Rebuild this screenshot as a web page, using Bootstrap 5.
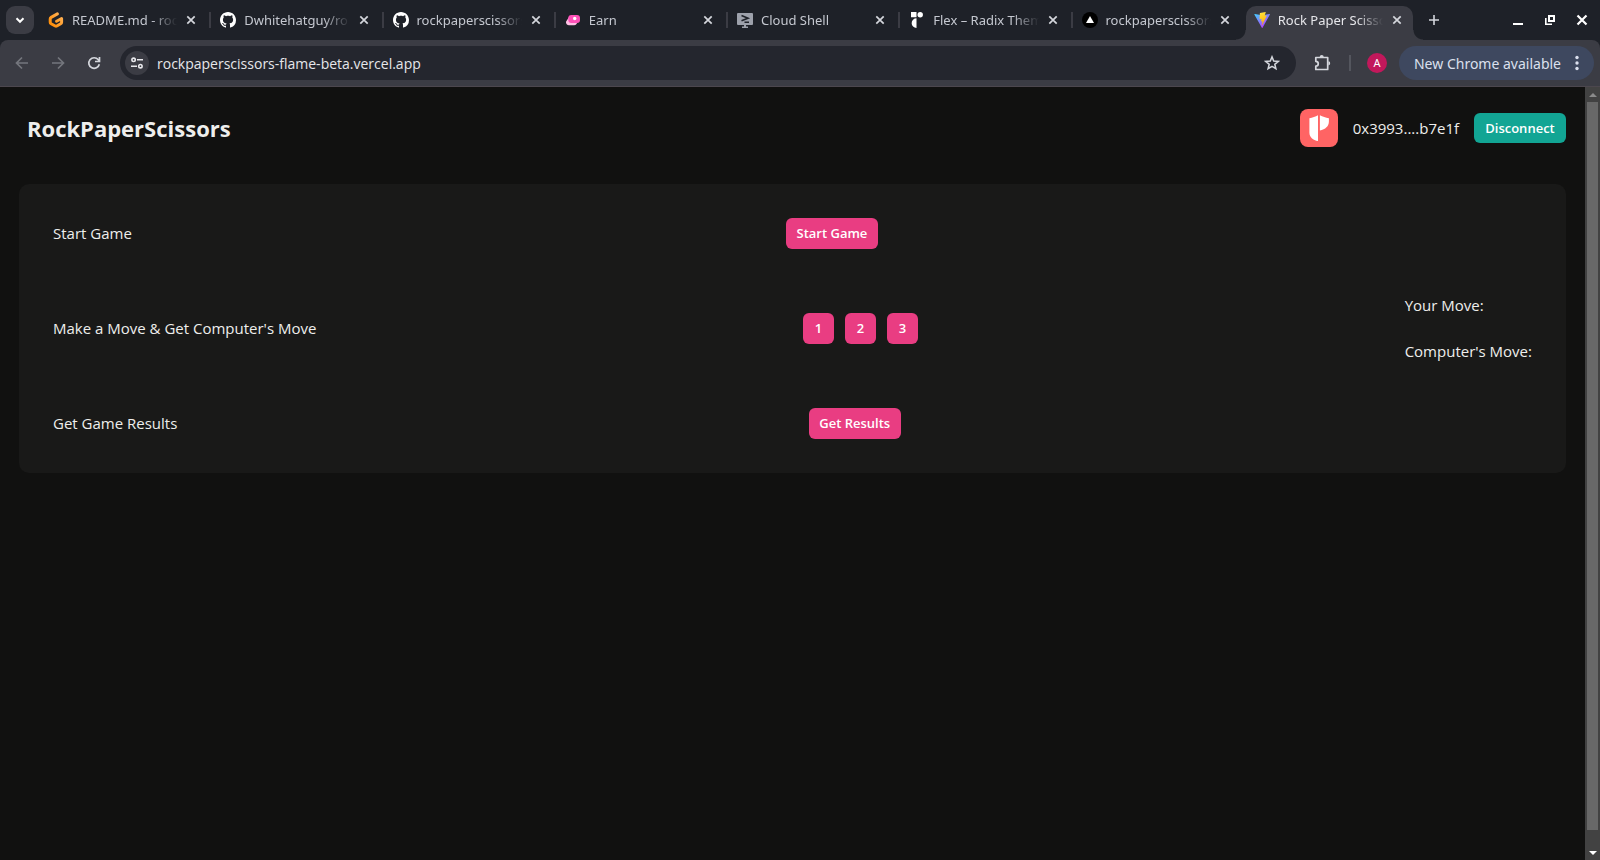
<!DOCTYPE html>
<html lang="en" data-bs-theme="dark">
<head>
<meta charset="utf-8">
<meta name="viewport" content="width=device-width, initial-scale=1">
<title>Rock Paper Scissors</title>
<link href="https://cdn.jsdelivr.net/npm/bootstrap@5.3.0/dist/css/bootstrap.min.css" rel="stylesheet">
<style>
  :root {
    --strip: #1e2128; --bar: #3b3c44; --field: #24262e; --page: #111110;
    --panel: #191918; --ink: #eeeeec; --pink: #e93d82; --teal: #12a594;
  }
  body { font-family: "Open Sans", "Noto Sans", sans-serif; font-size: 15px; line-height: 25px; color: var(--ink); background: var(--page); }
  header { font-family: "Noto Sans", "Open Sans", sans-serif; }
  svg { display: block; flex: none; }
  .plain-btn { border: 0; padding: 0; background: none; color: #d4d6dc; display: flex; align-items: center; justify-content: center; flex: none; }

  /* tab strip */
  .tab-strip { background: var(--strip); height: 40px; }
  .tab-search { width: 28px; height: 28px; border-radius: 9px; background: var(--bar); color: #fff; margin: 6px 5px 6px 6px; }
  .tab-item { flex: 1 1 0; min-width: 0; height: 40px; padding: 0 12px 0 9px; position: relative; }
  .tab-item::after { content: ""; position: absolute; right: 0; top: 12px; width: 2px; height: 16px; background: #3b3c44; }
  .tab-item.before-current::after { display: none; }
  .tab-link { color: #c5c8d0; font-size: 13px; line-height: 40px; text-decoration: none; white-space: nowrap; overflow: hidden; flex: 1; min-width: 0; margin: 0 6px 0 8px;
    -webkit-mask-image: linear-gradient(90deg, #000 calc(100% - 26px), transparent); mask-image: linear-gradient(90deg, #000 calc(100% - 26px), transparent); }
  .tab-close { width: 16px; height: 16px; }
  .tab-item.current { height: 34px; margin: 6px 5px 0 1px; padding: 0 8px; background: var(--bar); border-radius: 10px 10px 0 0; }
  .tab-item.current .tab-link { color: #e6e6ea; line-height: 28px; }
  .tab-item.current::before, .tab-item.current::after { content: ""; position: absolute; display: block; top: auto; bottom: 0; width: 10px; height: 10px; }
  .tab-item.current::before { left: -10px; right: auto; background: radial-gradient(circle at 0 0, transparent 9px, var(--bar) 10px); }
  .tab-item.current::after { right: -10px; background: radial-gradient(circle at 100% 0, transparent 9px, var(--bar) 10px); }
  .current-inner { height: 28px; }
  .window-tools { gap: 16px; padding: 0 10px 0 68px; }
  .window-tools .plain-btn { width: 16px; height: 16px; color: #fff; }

  /* toolbar */
  .tool-bar-wrap { background: var(--strip); }
  .tool-bar { background: var(--bar); height: 47px; border-radius: 8px 8px 0 0; border-bottom: 1px solid #4c474e; padding: 6px 6px 6px 14px; }
  .nav-tools { gap: 20px; margin-right: 18px; }
  .nav-tools .plain-btn { width: 16px; height: 16px; }
  .nav-tools .plain-btn:disabled { color: #74767d; }
  .url-field { background: var(--field); height: 34px; border-radius: 17px; padding: 0 16px 0 5px; }
  .site-info { width: 24px; height: 24px; border-radius: 50%; background: var(--bar); color: #e8e8ec; }
  .url-input { border: 0; outline: 0; background: transparent; color: #e6e6ea; font-family: "Open Sans", "Noto Sans", sans-serif; font-size: 14px; padding: 0; margin-left: 8px; }
  .tool-split { width: 2px; height: 16px; background: #54565e; margin: 0 16px 0 17px; }
  .avatar-dot { width: 20px; height: 20px; border-radius: 50%; background: #c2185b; color: #fff; font-size: 11px; line-height: 20px; margin-right: 12px; }
  .update-pill { height: 34px; border-radius: 17px; background: #3e485f; color: #dbe0ee; font-size: 14px; padding: 0 15px; gap: 14px; }

  /* page */
  .game-page { padding: 22px 19px 0; min-width: 0; }
  .game-head { padding-left: 8px; margin-bottom: 37px; height: 38px; }
  .game-title { font-size: 22px; line-height: 38px; font-weight: 700; margin: 0; color: var(--ink); }
  .wallet { gap: 15px; }
  .btn-game { --bs-btn-color: #fff; --bs-btn-hover-color: #fff; --bs-btn-bg: var(--pink); --bs-btn-hover-bg: #df3478;
    border: 0; border-radius: 6px; padding: 0 11px; height: 31px; min-width: 31px; font-size: 13px; line-height: 31px; font-weight: 600; }
  .btn-wallet { --bs-btn-bg: var(--teal); --bs-btn-hover-bg: #0d9b8a; height: 30px; line-height: 30px; width: 92px; padding: 0; }
  .btn-wide { width: 92px; padding: 0; }
  .game-panel { background: var(--panel); border: 0; border-radius: 10px; padding: 34px; gap: 44px; }
  .move-buttons { gap: 11px; }
  .move-list { gap: 21px; }

  /* scrollbar */
  .scroll-rail { width: 15px; background: #424242; flex: none; color: #8b8b8b; }
  .scroll-cap { height: 15px; }
  .scroll-thumb { width: 11px; background: #686868; margin-bottom: 15px; }
</style>
</head>
<body>
<svg class="d-none" aria-hidden="true">
  <symbol id="i-close" viewBox="0 0 16 16"><path d="M4.300 4.300l7.400 7.400M11.700 4.300l-7.400 7.400" stroke="currentColor" stroke-width="1.700"/></symbol>
  <symbol id="i-github" viewBox="0 0 16 16"><path fill="#fff" d="M8 0C3.58 0 0 3.58 0 8c0 3.54 2.29 6.53 5.47 7.59.4.07.55-.17.55-.38 0-.19-.01-.82-.01-1.49-2.01.37-2.53-.49-2.69-.94-.09-.23-.48-.94-.82-1.13-.28-.15-.68-.52-.01-.53.63-.01 1.08.58 1.23.82.72 1.21 1.87.87 2.33.66.07-.52.28-.87.51-1.07-1.78-.2-3.64-.89-3.64-3.95 0-.87.31-1.59.82-2.15-.08-.2-.36-1.02.08-2.12 0 0 .67-.21 2.2.82.64-.18 1.32-.27 2-.27s1.36.09 2 .27c1.53-1.04 2.2-.82 2.2-.82.44 1.1.16 1.92.08 2.12.51.56.82 1.27.82 2.15 0 3.07-1.87 3.75-3.65 3.95.29.25.54.73.54 1.48 0 1.07-.01 1.93-.01 2.2 0 .21.15.46.55.38A8.01 8.01 0 0 0 16 8c0-4.42-3.58-8-8-8z"/></symbol>
</svg>

<div class="d-flex flex-column vh-100 overflow-hidden">
  <header>
    <nav class="tab-strip d-flex align-items-center" aria-label="Tabs">
      <button class="plain-btn tab-search" aria-label="Search tabs"><svg width="12" height="12" viewBox="0 0 12 12"><path d="M2.500 4.300L6 7.800l3.500-3.500" fill="none" stroke="currentColor" stroke-width="2"/></svg></button>

      <div class="tab-item d-flex align-items-center">
        <svg width="16" height="16" viewBox="0 0 16 16"><defs><linearGradient id="gp" x1="1" y1="0" x2="0" y2="1"><stop offset="0" stop-color="#ffb45b"/><stop offset="1" stop-color="#ff8a00"/></linearGradient></defs><path d="M9.400 1.900L3.100 5.400Q2.200 5.900 2.200 6.900V10.200Q2.200 11.200 3.100 11.700L7.200 14Q8 14.400 8.800 14L12.700 11.700Q13.600 11.200 13.600 10.200V6.500L8.600 9.200" fill="none" stroke="url(#gp)" stroke-width="3" stroke-linecap="round" stroke-linejoin="round"/></svg>
        <a class="tab-link" href="#">README.md - roc</a>
        <button class="plain-btn tab-close" aria-label="Close tab"><svg width="16" height="16"><use href="#i-close"/></svg></button>
      </div>
      <div class="tab-item d-flex align-items-center">
        <svg width="16" height="16"><use href="#i-github"/></svg>
        <a class="tab-link" href="#">Dwhitehatguy/ro</a>
        <button class="plain-btn tab-close" aria-label="Close tab"><svg width="16" height="16"><use href="#i-close"/></svg></button>
      </div>
      <div class="tab-item d-flex align-items-center">
        <svg width="16" height="16"><use href="#i-github"/></svg>
        <a class="tab-link" href="#">rockpaperscissors</a>
        <button class="plain-btn tab-close" aria-label="Close tab"><svg width="16" height="16"><use href="#i-close"/></svg></button>
      </div>
      <div class="tab-item d-flex align-items-center">
        <svg width="16" height="16" viewBox="0 0 16 16"><path d="M4 5h7a3 3 0 0 1 2 4.500l-1.500 2.500a3 3 0 0 1-2.500 1.300H4a3 3 0 0 1-3-3.500z" fill="#ffc1e5"/><rect x="3.300" y="3" width="11.700" height="8" rx="3" fill="#ff50b8"/><circle cx="9.700" cy="6.500" r="1.700" fill="#fff"/></svg>
        <a class="tab-link" href="#">Earn</a>
        <button class="plain-btn tab-close" aria-label="Close tab"><svg width="16" height="16"><use href="#i-close"/></svg></button>
      </div>
      <div class="tab-item d-flex align-items-center">
        <svg width="16" height="16" viewBox="0 0 16 16"><rect y="1" width="16" height="12" rx="1" fill="#9da1ab"/><path d="M7 13h2v1.500h2V16H5v-1.500h2z" fill="#9da1ab"/><path d="M4.500 3.500l6.500 2.700-6.500 2.500M7.500 10.200H12" fill="none" stroke="#1e2128" stroke-width="1.600"/></svg>
        <a class="tab-link" href="#">Cloud Shell</a>
        <button class="plain-btn tab-close" aria-label="Close tab"><svg width="16" height="16"><use href="#i-close"/></svg></button>
      </div>
      <div class="tab-item d-flex align-items-center">
        <svg width="16" height="16" viewBox="0 0 16 16"><path d="M2 0h5.500v5.300H2zM7.500 6.300V16a4.850 4.850 0 0 1 0-9.700z" fill="#fff"/><circle cx="11.200" cy="2.700" r="2.700" fill="#fff"/></svg>
        <a class="tab-link" href="#">Flex – Radix Them</a>
        <button class="plain-btn tab-close" aria-label="Close tab"><svg width="16" height="16"><use href="#i-close"/></svg></button>
      </div>
      <div class="tab-item before-current d-flex align-items-center">
        <svg width="16" height="16" viewBox="0 0 16 16"><circle cx="8" cy="8" r="8"/><path d="M8 4l4 7H4z" fill="#fff"/></svg>
        <a class="tab-link" href="#">rockpaperscissors</a>
        <button class="plain-btn tab-close" aria-label="Close tab"><svg width="16" height="16"><use href="#i-close"/></svg></button>
      </div>
      <div class="tab-item current">
        <div class="current-inner d-flex align-items-center">
          <svg width="16" height="16" viewBox="0 0 32 32"><defs><linearGradient id="va" x1="0" y1="0" x2=".7" y2="1"><stop offset="0" stop-color="#41d1ff"/><stop offset="1" stop-color="#bd34fe"/></linearGradient><linearGradient id="vb" x1=".4" y1="0" x2=".6" y2="1"><stop offset="0" stop-color="#ffea83"/><stop offset=".1" stop-color="#ffdd35"/><stop offset="1" stop-color="#ffa800"/></linearGradient></defs><path d="M31.800 5.200L17.100 31.500c-.3.500-1.100.5-1.400 0L.7 5.200c-.3-.6.200-1.300.9-1.200l14.700 2.600L31 4c.7-.1 1.100.600.800 1.200z" fill="url(#va)"/><path d="M23 .1L12.100 2.200c-.2 0-.3.200-.3.400l-.7 11.300c0 .3.200.5.500.4l3-.7c.3-.1.500.2.500.5l-.9 4.400c-.1.300.2.600.5.500l1.900-.6c.3-.1.600.2.500.500l-1.400 6.900c-.1.400.5.700.7.300l9.200-18.500c.2-.3-.1-.6-.4-.500l-3.200.6c-.3.100-.600-.200-.500-.500l2.100-7.200c.100-.300-.200-.600-.600-.500z" fill="url(#vb)"/></svg>
          <a class="tab-link" href="#" aria-current="page">Rock Paper Scisso</a>
          <button class="plain-btn tab-close" aria-label="Close tab"><svg width="16" height="16"><use href="#i-close"/></svg></button>
        </div>
      </div>
      <button class="plain-btn ms-2" aria-label="New tab"><svg width="16" height="16" viewBox="0 0 16 16"><path d="M8 3v10M3 8h10" stroke="currentColor" stroke-width="1.600"/></svg></button>
      <div class="window-tools d-flex">
        <button class="plain-btn" aria-label="Minimize"><svg width="16" height="16" viewBox="0 0 16 16"><path d="M3 12h10" stroke="currentColor" stroke-width="2"/></svg></button>
        <button class="plain-btn" aria-label="Restore"><svg width="16" height="16" viewBox="0 0 16 16" fill="none" stroke="currentColor"><path d="M7 4h5v5H7z" stroke-width="2"/><path d="M3.800 6v6.200H10" stroke-width="1.600"/></svg></button>
        <button class="plain-btn" aria-label="Close window"><svg width="16" height="16" viewBox="0 0 16 16"><path d="M3.500 3.500l9 9M12.500 3.500l-9 9" stroke="currentColor" stroke-width="2.200"/></svg></button>
      </div>
    </nav>

    <div class="tool-bar-wrap">
      <div class="tool-bar d-flex align-items-center">
        <div class="nav-tools d-flex">
          <button class="plain-btn" aria-label="Back" disabled><svg width="16" height="16" viewBox="0 0 16 16" fill="none" stroke="currentColor" stroke-width="1.700"><path d="M14 8H3M8 2.500L2.500 8 8 13.500"/></svg></button>
          <button class="plain-btn" aria-label="Forward" disabled><svg width="16" height="16" viewBox="0 0 16 16" fill="none" stroke="currentColor" stroke-width="1.700"><path d="M2 8h11M8 2.500L13.500 8 8 13.500"/></svg></button>
          <button class="plain-btn" aria-label="Reload"><svg width="16" height="16" viewBox="0 0 16 16" fill="none" stroke="currentColor" stroke-width="1.700"><path d="M13.300 9.200A5.300 5.300 0 1 1 12.300 4.800L13.300 6M13.500 2v4.500H9"/></svg></button>
        </div>
        <div class="url-field d-flex align-items-center flex-fill">
          <button class="plain-btn site-info" aria-label="Site information"><svg width="14" height="14" viewBox="0 0 14 14" fill="none" stroke="currentColor" stroke-width="1.600"><circle cx="3.600" cy="3.800" r="1.700"/><path d="M7 3.800h6M1 10.200h6"/><circle cx="10.400" cy="10.200" r="1.700"/></svg></button>
          <input class="url-input flex-fill" type="text" aria-label="Address" value="rockpaperscissors-flame-beta.vercel.app">
          <button class="plain-btn" aria-label="Bookmark this tab"><svg width="16" height="16" viewBox="0 0 16 16" fill="none" stroke="currentColor" stroke-width="1.500"><path d="M8 1.900l1.700 4.200 4.600.3-3.500 2.900 1.100 4.400L8 11.300l-3.900 2.400 1.100-4.400-3.500-2.900 4.600-.3z"/></svg></button>
        </div>
        <button class="plain-btn ms-3" aria-label="Extensions"><svg width="20" height="20" viewBox="0 0 20 20"><path d="M4.300 4.500h11.400V16.500H3.800v-3.300a2.300 2.300 0 0 0 0-4.900V4.500z" fill="none" stroke="currentColor" stroke-width="1.700" stroke-linejoin="round"/><path d="M7.700 3.900a2 1.900 0 0 1 4 0zM16.400 8.200a1.800 2.100 0 0 1 0 4.200z" fill="currentColor"/></svg></button>
        <span class="tool-split"></span>
        <button class="plain-btn avatar-dot" aria-label="Profile A">A</button>
        <button class="plain-btn update-pill"><span>New Chrome available</span><svg width="4" height="16" viewBox="0 0 4 16" fill="currentColor"><circle cx="2" cy="2.500" r="1.700"/><circle cx="2" cy="8" r="1.700"/><circle cx="2" cy="13.500" r="1.700"/></svg></button>
      </div>
    </div>
  </header>

  <div class="d-flex flex-fill">
    <main class="game-page flex-fill">
      <div class="game-head d-flex justify-content-between align-items-center">
        <h1 class="game-title">RockPaperScissors</h1>
        <div class="wallet d-flex align-items-center">
          <svg width="38" height="38" viewBox="0 0 38 38"><rect width="38" height="38" rx="8" fill="#ff6464"/><path d="M18 6.200V32c-5-1-8.600-4-8.600-8.600V9.200C12.500 8.500 15.500 7.400 18 6.200zM19.900 6.200c2.800 1.400 5.800 2.500 9 3v3.400c0 4.700-3.500 8-9 8.800z" fill="#fff"/></svg>
          <span>0x3993....b7e1f</span>
          <button class="btn btn-game btn-wallet">Disconnect</button>
        </div>
      </div>

      <section class="card game-panel">
        <div class="d-flex justify-content-between align-items-center">
          <span>Start Game</span>
          <button class="btn btn-game btn-wide">Start Game</button>
          <span></span>
        </div>
        <div class="d-flex justify-content-between align-items-center">
          <span>Make a Move &amp; Get Computer's Move</span>
          <div class="move-buttons d-flex">
            <button class="btn btn-game">1</button>
            <button class="btn btn-game">2</button>
            <button class="btn btn-game">3</button>
          </div>
          <div class="move-list d-flex flex-column">
            <span>Your Move:</span>
            <span>Computer's Move:</span>
          </div>
        </div>
        <div class="d-flex justify-content-between align-items-center">
          <span>Get Game Results</span>
          <button class="btn btn-game btn-wide">Get Results</button>
          <span></span>
        </div>
      </section>
    </main>
    <div class="scroll-rail d-flex flex-column align-items-center" aria-hidden="true">
      <div class="scroll-cap d-flex align-items-center"><svg width="8" height="4" viewBox="0 0 8 4"><path d="M4 0l4 4H0z" fill="currentColor"/></svg></div>
      <div class="scroll-thumb flex-fill"></div>
      <div class="scroll-cap d-flex align-items-center"><svg width="8" height="4" viewBox="0 0 8 4"><path d="M0 0h8L4 4z" fill="#fff"/></svg></div>
    </div>
  </div>
</div>
<script src="https://cdn.jsdelivr.net/npm/bootstrap@5.3.0/dist/js/bootstrap.bundle.min.js"></script>
</body>
</html>
